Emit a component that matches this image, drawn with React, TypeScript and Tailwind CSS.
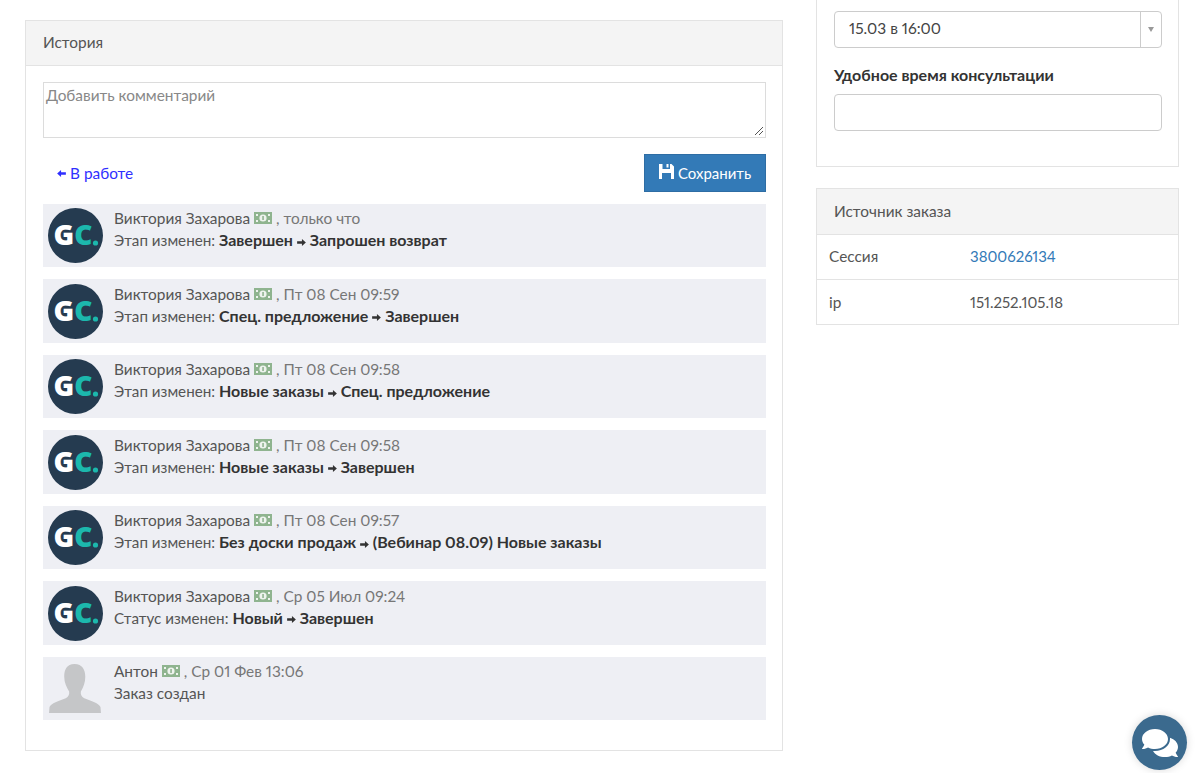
import { FaComments } from 'react-icons/fa';

const history = [
  { author: 'Виктория Захарова', date: 'только что', label: 'Этап изменен:', from: 'Завершен', to: 'Запрошен возврат' },
  { author: 'Виктория Захарова', date: 'Пт 08 Сен 09:59', label: 'Этап изменен:', from: 'Спец. предложение', to: 'Завершен' },
  { author: 'Виктория Захарова', date: 'Пт 08 Сен 09:58', label: 'Этап изменен:', from: 'Новые заказы', to: 'Спец. предложение' },
  { author: 'Виктория Захарова', date: 'Пт 08 Сен 09:58', label: 'Этап изменен:', from: 'Новые заказы', to: 'Завершен' },
  { author: 'Виктория Захарова', date: 'Пт 08 Сен 09:57', label: 'Этап изменен:', from: 'Без доски продаж', to: '(Вебинар 08.09) Новые заказы' },
  { author: 'Виктория Захарова', date: 'Ср 05 Июл 09:24', label: 'Статус изменен:', from: 'Новый', to: 'Завершен' },
];

const Arrow = ({ left = false, className = '' }: { left?: boolean; className?: string }) => (
  <svg viewBox="0 0 10 8" className={`inline-block w-[9px] h-[7px] ${className}`} fill="currentColor">
    {left ? <path d="M4.500 0 L0 4 L4.500 8 V5.500 H10 V2.500 H4.500 Z" /> : <path d="M5.500 0 L10 4 L5.500 8 V5.500 H0 V2.500 H5.500 Z" />}
  </svg>
);

const Money = () => (
  <svg viewBox="0 0 18 12" className="inline-block w-[18px] h-[12px] align-[0px]">
    <rect width="18" height="12" fill="#8fb48f" />
    <circle cx="9" cy="6" r="3.6" fill="#eef3ee" />
    <rect x="8.400" y="4" width="1.300" height="4" fill="#7da57d" />
    <rect x="2" y="2" width="2" height="2" fill="#eef3ee" />
    <rect x="14" y="2" width="2" height="2" fill="#eef3ee" />
    <rect x="2" y="8" width="2" height="2" fill="#eef3ee" />
    <rect x="14" y="8" width="2" height="2" fill="#eef3ee" />
  </svg>
);

const SaveIcon = () => (
  <svg viewBox="0 0 15 15" className="mb-[3px] h-[15px] w-[15px]" fill="currentColor">
    <path d="M0 0 H3.500 V5 H11 V0 H12.500 L15 2.500 V15 H12 V9 H3 V15 H0 Z" />
    <rect x="7.500" y="0" width="2" height="3.500" />
  </svg>
);

const GcLogo = () => (
  <svg viewBox="0 0 55 55" className="w-[55px] h-[55px] shrink-0">
    <circle cx="27.500" cy="27.500" r="27.500" fill="#253b50" />
    <text x="5.500" y="37" fontSize="28" fontWeight="800" fontFamily="'Open Sans', sans-serif" fill="#ffffff">
      G<tspan fill="#1cb8ad">C</tspan>
    </text>
    <circle cx="47.500" cy="35" r="2.600" fill="#1cb8ad" />
  </svg>
);

const UserPic = () => (
  <svg viewBox="0 0 55 50" className="w-[54px] h-[49px] shrink-0 self-end mb-[7px]" fill="#c5c6c8">
    <path d="M27 0 C35 0 38 6 38 13 C38 19 36 24 33.500 28 C33 31 34 33 37 35 C44 38 52 40 53.500 44 L54 50 H1 L1.500 44 C3 40 11 38 18 35 C21 33 22 31 21.500 28 C19 24 16.500 19 16.500 13 C16.500 6 19 0 27 0 Z" />
  </svg>
);

export default function App() {
  return (
    <div className="relative h-[773px] w-[1199px] overflow-hidden bg-white font-['Lato','Open_Sans',sans-serif] text-[15.4px] leading-[22px] text-[#555] proportional-nums">
      <div className="flex items-start pl-[25px]">
        <section className="mt-[20px] w-[758px] border border-[#e3e3e3]">
          <div className="flex h-[45px] items-center border-b border-[#e3e3e3] bg-[#f4f4f4] pb-[3px] pl-[17px] text-[#555]">История</div>
          <div className="pt-[16px] pr-[16px] pb-[29.6px] pl-[17px]">
            <div className="relative h-[56px] border border-[#dcdcdc] px-[2px] pt-[1px] text-[#888]">
              Добавить комментарий
              <svg viewBox="0 0 10 10" className="absolute right-[1px] bottom-[1px] h-[10px] w-[10px]" stroke="#555" strokeWidth="1">
                <path d="M1 9 L9 1 M5 9 L9 5" />
              </svg>
            </div>
            <div className="mt-[16px] flex items-center justify-between">
              <a className="ml-[14px] flex items-center gap-[4px] text-[#2f2fff]"><Arrow left />В работе</a>
              <button className="flex h-[38px] w-[122px] items-center justify-center gap-[4px] border border-[#2e6da4] bg-[#337ab7] text-[15px] text-white">
                <SaveIcon />
                Сохранить
              </button>
            </div>
            <div className="mt-[11.9px] flex flex-col gap-[12px]">
              {history.map((item, i) => (
                <div key={i} className="flex h-[63.5px] items-center gap-[11px] bg-[#eeeff4] pl-[5px]">
                  <GcLogo />
                  <div className="self-start pt-[3.6px]">
                    <div>
                      {item.author} <Money /> <span className="text-[#777]">, {item.date}</span>
                    </div>
                    <div>
                      <span className="text-[15.2px]">{item.label}</span>{' '}
                      <b className="text-[16px] font-bold text-[#333]">
                        {item.from} <Arrow className="text-[#333]" /> {item.to}
                      </b>
                    </div>
                  </div>
                </div>
              ))}
              <div className="flex h-[63.5px] items-center gap-[12px] bg-[#eeeff4] pl-[5px]">
                <UserPic />
                <div className="self-start pt-[3.6px]">
                  <div>
                    Антон <Money /> <span className="text-[#777]">, Ср 01 Фев 13:06</span>
                  </div>
                  <div>Заказ создан</div>
                </div>
              </div>
            </div>
          </div>
        </section>

        <aside className="ml-[33px] w-[363px]">
          <div className="h-[167px] border-x border-b border-[#e3e3e3] pt-[11px] pr-[16px] pl-[17px]">
            <div className="flex h-[37px] rounded-[4px] border border-[#ccc]">
              <div className="flex flex-1 items-center pb-[3px] pl-[14px] text-[15.5px] text-[#444]">15.03 в 16:00</div>
              <div className="flex w-[21px] items-center justify-center border-l border-[#ccc]">
                <div className="h-0 w-0 border-x-[3.5px] border-t-[5px] border-x-transparent border-t-[#999]" />
              </div>
            </div>
            <div className="mt-[16px] text-[16px] font-bold text-[#333]">Удобное время консультации</div>
            <div className="mt-[8px] h-[37px] rounded-[4px] border border-[#ccc]" />
          </div>
          <div className="mt-[21px] border border-[#e3e3e3]">
            <div className="flex h-[46px] items-center border-b border-[#e3e3e3] bg-[#f4f4f4] pb-[2px] pl-[17px]">Источник заказа</div>
            <div className="flex h-[45px] items-center border-b border-[#e3e3e3] pb-[2px] pl-[12px]">
              <span className="w-[141px]">Сессия</span>
              <a className="text-[15px] text-[#337ab7]">3800626134</a>
            </div>
            <div className="flex h-[44px] items-center pl-[12px]">
              <span className="w-[141px]">ip</span>
              <span className="text-[15px]">151.252.105.18</span>
            </div>
          </div>
        </aside>
      </div>

      <div className="absolute top-[715px] left-[1132px] flex h-[55px] w-[55px] items-center justify-center rounded-full bg-[#3b6a8e] shadow-[0_0_8px_rgba(0,0,0,0.15)]">
        <FaComments className="h-[36px] w-[36px] text-white" />
      </div>
    </div>
  );
}
